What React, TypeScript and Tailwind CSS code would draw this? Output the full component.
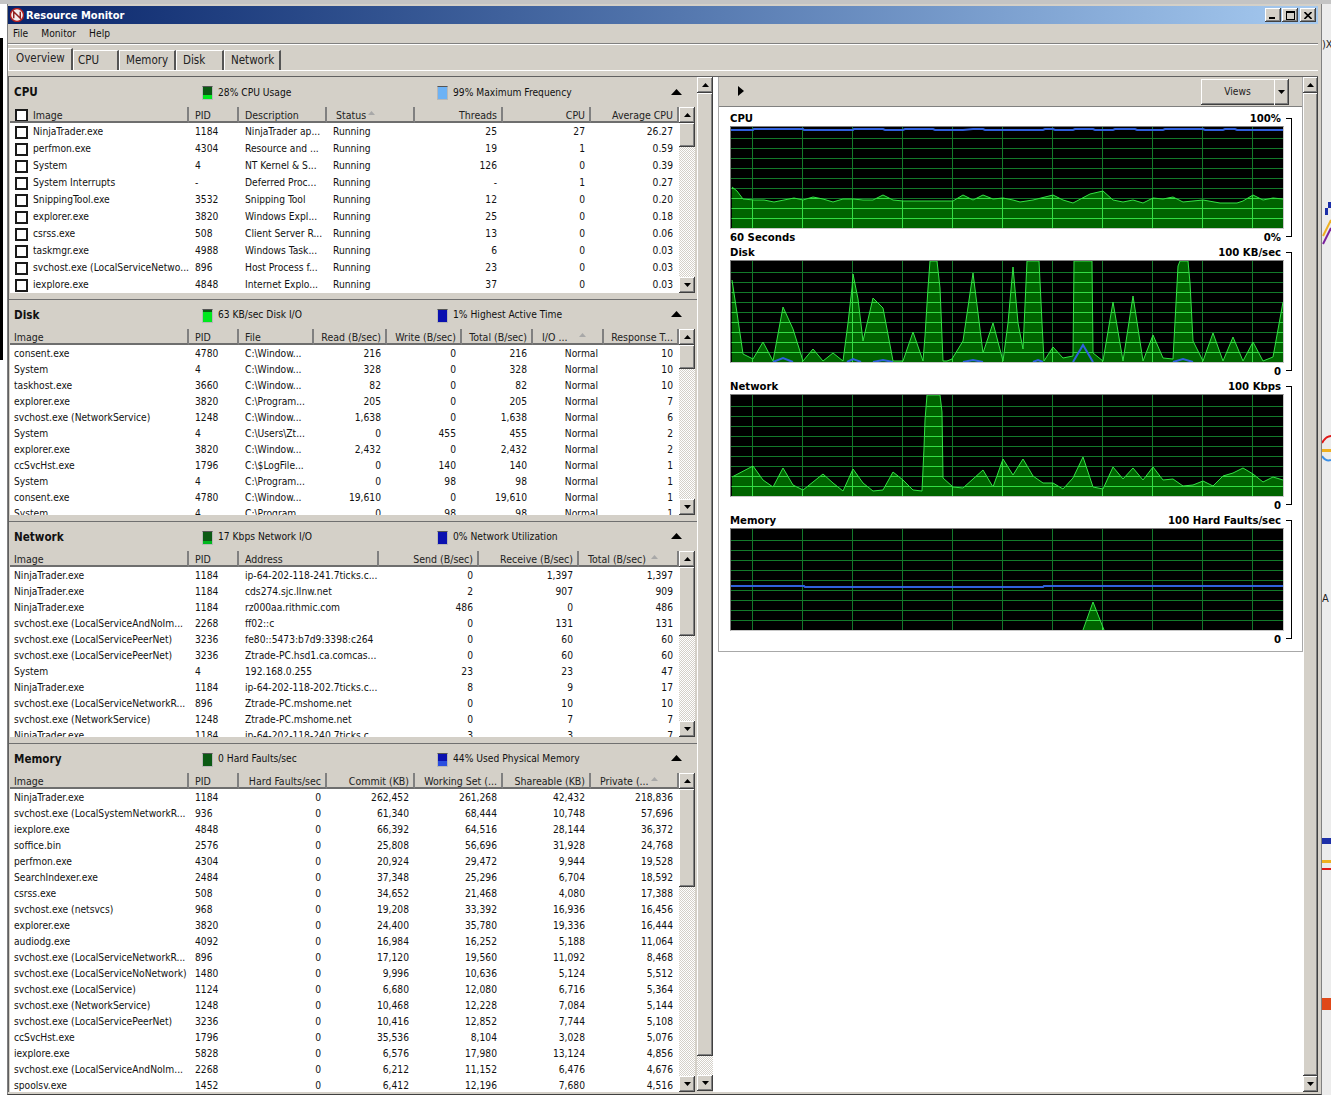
import type { ReactNode } from "react";

const FONT = "[font-family:'DejaVu_Sans_Condensed','Noto_Sans',sans-serif]";
const RAISED = "shadow-[inset_-1px_-1px_0_#404040,inset_1px_1px_0_#ffffff,inset_-2px_-2px_0_#808080]";

type Column = { title: string; width: string; right?: boolean; valueRight?: boolean; sortClass?: string };
type Pt = [number, number];

const cpuColumns: Column[] = [
  { title: "Image", width: "w-[179px]" },
  { title: "PID", width: "w-[50px]" },
  { title: "Description", width: "w-[88px]" },
  { title: "Status", width: "w-[88px]", sortClass: "left-[41px]" },
  { title: "Threads", width: "w-[88px]", right: true, valueRight: true },
  { title: "CPU", width: "w-[88px]", right: true, valueRight: true },
  { title: "Average CPU", width: "w-[88px]", right: true, valueRight: true },
];
const cpuRows = [
  ["NinjaTrader.exe", "1184", "NinjaTrader ap...", "Running", "25", "27", "26.27"],
  ["perfmon.exe", "4304", "Resource and ...", "Running", "19", "1", "0.59"],
  ["System", "4", "NT Kernel & S...", "Running", "126", "0", "0.39"],
  ["System Interrupts", "-", "Deferred Proc...", "Running", "-", "1", "0.27"],
  ["SnippingTool.exe", "3532", "Snipping Tool", "Running", "12", "0", "0.20"],
  ["explorer.exe", "3820", "Windows Expl...", "Running", "25", "0", "0.18"],
  ["csrss.exe", "508", "Client Server R...", "Running", "13", "0", "0.06"],
  ["taskmgr.exe", "4988", "Windows Task...", "Running", "6", "0", "0.03"],
  ["svchost.exe (LocalServiceNetwo...", "896", "Host Process f...", "Running", "23", "0", "0.03"],
  ["iexplore.exe", "4848", "Internet Explo...", "Running", "37", "0", "0.03"],
];

const diskColumns: Column[] = [
  { title: "Image", width: "w-[179px]" },
  { title: "PID", width: "w-[50px]" },
  { title: "File", width: "w-[75px]" },
  { title: "Read (B/sec)", width: "w-[73px]", right: true, valueRight: true },
  { title: "Write (B/sec)", width: "w-[75px]", right: true, valueRight: true },
  { title: "Total (B/sec)", width: "w-[71px]", right: true, valueRight: true },
  { title: "I/O ...", width: "w-[71px]", valueRight: true, sortClass: "right-[16px]" },
  { title: "Response T...", width: "w-[75px]", right: true, valueRight: true },
];
const diskRows = [
  ["consent.exe", "4780", "C:\\Window...", "216", "0", "216", "Normal", "10"],
  ["System", "4", "C:\\Window...", "328", "0", "328", "Normal", "10"],
  ["taskhost.exe", "3660", "C:\\Window...", "82", "0", "82", "Normal", "10"],
  ["explorer.exe", "3820", "C:\\Program...", "205", "0", "205", "Normal", "7"],
  ["svchost.exe (NetworkService)", "1248", "C:\\Window...", "1,638", "0", "1,638", "Normal", "6"],
  ["System", "4", "C:\\Users\\Zt...", "0", "455", "455", "Normal", "2"],
  ["explorer.exe", "3820", "C:\\Window...", "2,432", "0", "2,432", "Normal", "2"],
  ["ccSvcHst.exe", "1796", "C:\\$LogFile...", "0", "140", "140", "Normal", "1"],
  ["System", "4", "C:\\Program...", "0", "98", "98", "Normal", "1"],
  ["consent.exe", "4780", "C:\\Window...", "19,610", "0", "19,610", "Normal", "1"],
  ["System", "4", "C:\\Program...", "0", "98", "98", "Normal", "1"],
];

const networkColumns: Column[] = [
  { title: "Image", width: "w-[179px]" },
  { title: "PID", width: "w-[50px]" },
  { title: "Address", width: "w-[140px]" },
  { title: "Send (B/sec)", width: "w-[100px]", right: true, valueRight: true },
  { title: "Receive (B/sec)", width: "w-[100px]", right: true, valueRight: true },
  { title: "Total (B/sec)", width: "w-[100px]", valueRight: true, sortClass: "right-[19px]" },
];
const networkRows = [
  ["NinjaTrader.exe", "1184", "ip-64-202-118-241.7ticks.c...", "0", "1,397", "1,397"],
  ["NinjaTrader.exe", "1184", "cds274.sjc.llnw.net", "2", "907", "909"],
  ["NinjaTrader.exe", "1184", "rz000aa.rithmic.com", "486", "0", "486"],
  ["svchost.exe (LocalServiceAndNoIm...", "2268", "ff02::c", "0", "131", "131"],
  ["svchost.exe (LocalServicePeerNet)", "3236", "fe80::5473:b7d9:3398:c264", "0", "60", "60"],
  ["svchost.exe (LocalServicePeerNet)", "3236", "Ztrade-PC.hsd1.ca.comcas...", "0", "60", "60"],
  ["System", "4", "192.168.0.255", "23", "23", "47"],
  ["NinjaTrader.exe", "1184", "ip-64-202-118-202.7ticks.c...", "8", "9", "17"],
  ["svchost.exe (LocalServiceNetworkR...", "896", "Ztrade-PC.mshome.net", "0", "10", "10"],
  ["svchost.exe (NetworkService)", "1248", "Ztrade-PC.mshome.net", "0", "7", "7"],
  ["NinjaTrader.exe", "1184", "ip-64-202-118-240.7ticks.c...", "3", "3", "7"],
];

const memoryColumns: Column[] = [
  { title: "Image", width: "w-[179px]" },
  { title: "PID", width: "w-[50px]" },
  { title: "Hard Faults/sec", width: "w-[88px]", right: true, valueRight: true },
  { title: "Commit (KB)", width: "w-[88px]", right: true, valueRight: true },
  { title: "Working Set (...", width: "w-[88px]", right: true, valueRight: true },
  { title: "Shareable (KB)", width: "w-[88px]", right: true, valueRight: true },
  { title: "Private (...", width: "w-[88px]", valueRight: true, sortClass: "right-[19px]" },
];
const memoryRows = [
  ["NinjaTrader.exe", "1184", "0", "262,452", "261,268", "42,432", "218,836"],
  ["svchost.exe (LocalSystemNetworkR...", "936", "0", "61,340", "68,444", "10,748", "57,696"],
  ["iexplore.exe", "4848", "0", "66,392", "64,516", "28,144", "36,372"],
  ["soffice.bin", "2576", "0", "25,808", "56,696", "31,928", "24,768"],
  ["perfmon.exe", "4304", "0", "20,924", "29,472", "9,944", "19,528"],
  ["SearchIndexer.exe", "2484", "0", "37,348", "25,296", "6,704", "18,592"],
  ["csrss.exe", "508", "0", "34,652", "21,468", "4,080", "17,388"],
  ["svchost.exe (netsvcs)", "968", "0", "19,208", "33,392", "16,936", "16,456"],
  ["explorer.exe", "3820", "0", "24,400", "35,780", "19,336", "16,444"],
  ["audiodg.exe", "4092", "0", "16,984", "16,252", "5,188", "11,064"],
  ["svchost.exe (LocalServiceNetworkR...", "896", "0", "17,120", "19,560", "11,092", "8,468"],
  ["svchost.exe (LocalServiceNoNetwork)", "1480", "0", "9,996", "10,636", "5,124", "5,512"],
  ["svchost.exe (LocalService)", "1124", "0", "6,680", "12,080", "6,716", "5,364"],
  ["svchost.exe (NetworkService)", "1248", "0", "10,468", "12,228", "7,084", "5,144"],
  ["svchost.exe (LocalServicePeerNet)", "3236", "0", "10,416", "12,852", "7,744", "5,108"],
  ["ccSvcHst.exe", "1796", "0", "35,536", "8,104", "3,028", "5,076"],
  ["iexplore.exe", "5828", "0", "6,576", "17,980", "13,124", "4,856"],
  ["svchost.exe (LocalServiceAndNoIm...", "2268", "0", "6,212", "11,152", "6,476", "4,676"],
  ["spoolsv.exe", "1452", "0", "6,412", "12,196", "7,680", "4,516"],
];

// chart traces, x and y are px inside the 552x101 plot
const cpuLine: Pt[] = [[1,60],[6,64],[12,72],[23,73],[33,73],[43,75],[53,73],[63,71],[72,73],[82,70],[92,72],[102,75],[112,72],[122,72],[132,73],[142,73],[152,68],[162,73],[172,74],[222,74],[232,68],[242,73],[252,68],[262,72],[272,71],[282,73],[289,75],[302,73],[322,68],[332,73],[342,76],[359,67],[372,64],[382,73],[392,75],[402,73],[412,76],[422,71],[432,72],[442,70],[452,75],[472,73],[489,76],[506,76],[512,74],[522,68],[532,73],[542,71],[552,72]];
const diskLine: Pt[] = [[1,19],[6,52],[12,93],[22,98],[32,81],[42,100],[52,46],[62,68],[72,100],[82,88],[92,100],[102,92],[112,100],[117,62],[121,27],[122,13],[127,38],[132,80],[142,37],[152,47],[162,100],[172,100],[182,71],[192,100],[194,75],[197,27],[199,0],[206,0],[209,27],[212,100],[216,100],[221,98],[232,80],[242,12],[252,92],[262,62],[272,100],[277,62],[282,6],[287,62],[292,88],[296,0],[308,0],[311,62],[313,100],[322,86],[332,97],[342,95],[343,0],[361,0],[362,92],[372,100],[382,41],[392,100],[402,35],[412,100],[422,74],[432,97],[442,98],[447,5],[449,0],[457,0],[459,22],[462,80],[472,100],[482,72],[492,100],[502,76],[512,100],[522,81],[532,100],[542,96],[552,41]];
const networkLine: Pt[] = [[1,82],[22,71],[32,85],[42,92],[52,73],[62,90],[72,95],[92,79],[102,88],[112,96],[122,74],[132,88],[142,96],[152,95],[162,77],[172,85],[182,95],[191,96],[193,53],[194,25],[196,0],[209,0],[211,17],[212,83],[222,92],[232,93],[252,75],[262,92],[272,64],[282,80],[287,72],[292,64],[302,81],[312,88],[322,88],[332,94],[342,83],[352,62],[362,92],[372,94],[382,72],[392,84],[402,73],[412,85],[422,72],[432,85],[442,84],[452,91],[462,90],[472,86],[482,91],[492,81],[502,78],[512,73],[522,79],[532,87],[542,82],[552,85]];
const memoryLine: Pt[] = [[352,101],[362,73],[373,101]];

const cpuBlue: Pt[][] = [[[0,3],[22,3],[23,2],[72,2],[73,3],[122,3],[123,2],[152,2],[154,3],[172,3],[174,2],[202,2],[204,3],[232,3],[242,2],[252,2],[254,3],[312,3],[314,2],[322,2],[324,3],[342,3],[344,2],[362,2],[364,3],[382,3],[384,2],[404,2],[406,3],[432,3],[434,2],[444,2],[472,2],[474,3],[492,3],[494,2],[504,2],[506,3],[552,3]]];
const diskBlue: Pt[][] = [[[42,101],[52,97],[62,101]],[[116,101],[122,98],[130,101]],[[142,101],[152,99],[162,101]],[[232,101],[242,99],[252,101]],[[302,101],[307,99],[312,101]],[[342,101],[352,84],[362,101]],[[442,101],[452,98],[462,101]]];
const memoryBlue: Pt[][] = [[[0,57],[73,57],[74,58],[312,58],[313,57],[552,57]]];

const VERTICALS = [21, 71, 121, 171, 221, 271, 321, 371, 421, 471, 521];
const HORIZONTALS = [11, 21, 31, 41, 51, 61, 71, 81, 91];

function toPath(points: Pt[]) {
  return points.map(([x, y]) => `${x},${y}`).join(" ");
}

function GridLines({ stroke }: { stroke: string }) {
  return (
    <>
      {HORIZONTALS.map((y) => (
        <line key={y} x1="0" x2="552" y1={y + 0.5} y2={y + 0.5} stroke={stroke} strokeWidth="1" />
      ))}
      {VERTICALS.map((x) => (
        <line key={x} y1="0" y2="101" x1={x + 0.5} x2={x + 0.5} stroke={stroke} strokeWidth="1" />
      ))}
    </>
  );
}

function Plot({ id, line, blue }: { id: string; line: Pt[]; blue: Pt[][] }) {
  const area = `${line[0][0]},101 ${toPath(line)} ${line[line.length - 1][0]},101`;
  return (
    <div className="h-[103px] w-[554px] border border-t-[#808080] border-l-[#808080] border-r-[#c8c8c8] border-b-[#c8c8c8]">
      <svg width="552" height="101" className="block bg-black">
        <clipPath id={id}>
          <polygon points={area} />
        </clipPath>
        <GridLines stroke="#13792a" />
        <polygon points={area} fill="#006400" />
        <g clipPath={`url(#${id})`}>
          <GridLines stroke="#33dd44" />
        </g>
        <polyline points={toPath(line)} fill="none" stroke="#33e244" strokeWidth="1" />
        {blue.map((part, i) => (
          <polyline key={i} points={toPath(part)} fill="none" stroke="#3060dc" strokeWidth="2" />
        ))}
      </svg>
    </div>
  );
}

function ChartBlock(props: {
  id: string;
  title: string;
  top: string;
  bottom: string;
  footer?: string;
  line: Pt[];
  blue: Pt[][];
}) {
  return (
    <div className="flex h-[134px]">
      <div className="w-[554px] text-[11.25px] font-bold leading-[18px] text-black">
        <div className="flex h-[16px] justify-between pr-[3px]">
          <span>{props.title}</span>
          <span>{props.top}</span>
        </div>
        <Plot id={props.id} line={props.line} blue={props.blue} />
        <div className="flex h-[15px] justify-between pr-[3px]">
          <span>{props.footer}</span>
          <span>{props.bottom}</span>
        </div>
      </div>
      <div className="ml-[2px] mt-[8px] h-[119px] w-[6px] border-y border-r border-black" />
    </div>
  );
}

function Arrow({ dir }: { dir: "up" | "down" }) {
  return (
    <svg width="7" height="4" viewBox="0 0 7 4" className="block">
      <polygon points={dir === "up" ? "3.5,0 7,4 0,4" : "0,0 7,0 3.5,4"} fill="#000" />
    </svg>
  );
}

function ScrollButton({ dir }: { dir: "up" | "down" }) {
  return (
    <div className={`flex h-[16px] shrink-0 items-center justify-center bg-[#d4d0c8] ${RAISED}`}>
      <Arrow dir={dir} />
    </div>
  );
}

function Scrollbar({ thumb, className }: { thumb: string; className: string }) {
  return (
    <div className={`flex shrink-0 flex-col ${className}`}>
      <ScrollButton dir="up" />
      <div className={`shrink-0 bg-[#d4d0c8] ${RAISED} ${thumb}`} />
      <div className="flex-1 bg-[repeating-conic-gradient(#ffffff_0_25%,#d4d0c8_0_50%)] bg-[length:2px_2px]" />
      <ScrollButton dir="down" />
    </div>
  );
}

function CheckBox() {
  return <span className="mr-[5px] h-[13px] w-[13px] shrink-0 border-2 border-[#1a1a1a] bg-white" />;
}

function cellPad(index: number, check?: boolean) {
  if (index !== 0) return "pl-[6px]";
  return check ? "pl-[5px]" : "pl-[4px]";
}

function HeaderCell({ column, index, check }: { column: Column; index: number; check?: boolean }) {
  const aligned = column.right ? "justify-end pr-[4px]" : cellPad(index, check);
  return (
    <div
      className={`relative flex h-[16px] shrink-0 items-center overflow-hidden whitespace-nowrap border-b-2 border-r-2 border-b-[#6e6e6e] border-r-[#808080] pt-[2px] ${column.width} ${aligned}`}
    >
      {check && index === 0 && <CheckBox />}
      <span className={column.sortClass ? "pl-[3px]" : ""}>{column.title}</span>
      {column.sortClass && (
        <svg width="7" height="4" className={`absolute top-[4px] ${column.sortClass}`}>
          <polygon points="3.5,0 7,4 0,4" fill="#a8a8a8" />
        </svg>
      )}
    </div>
  );
}

function DataTable(props: {
  columns: Column[];
  rows: string[][];
  check?: boolean;
  rowHeight: string;
  thumb: string;
  height: string;
}) {
  const { columns, rows, check, rowHeight } = props;
  return (
    <div className={`flex pl-px ${props.height}`}>
      <div className="flex w-[669px] flex-col">
        <div className="flex bg-[#d4d0c8] text-[10.5px] text-[#222]">
          {columns.map((c, i) => (
            <HeaderCell key={c.title} column={c} index={i} check={check} />
          ))}
        </div>
        <div className="flex-1 overflow-hidden bg-white text-[#111]">
          {rows.map((row, r) => (
            <div key={r} className={`flex ${rowHeight}`}>
              {row.map((cell, i) => (
                <div
                  key={i}
                  className={`flex shrink-0 items-center overflow-hidden whitespace-nowrap pt-[2px] ${columns[i].width} ${columns[i].valueRight ? "justify-end pr-[6px]" : cellPad(i, check)}`}
                >
                  {check && i === 0 && <CheckBox />}
                  {cell}
                </div>
              ))}
            </div>
          ))}
        </div>
      </div>
      <Scrollbar thumb={props.thumb} className="h-full w-[16px]" />
    </div>
  );
}

function LegendItem({ top, bottom, label, width }: { top: string; bottom: string; label: string; width: string }) {
  return (
    <div className={`flex items-center ${width}`}>
      <span className="mr-[5px] flex h-[14px] w-[11px] shrink-0 flex-col border border-[#b8b8b8] border-t-[#555]">
        <span className={top} />
        <span className={bottom} />
      </span>
      {label}
    </div>
  );
}

function SectionHeader(props: { title: string; height: string; legends: ReactNode }) {
  return (
    <div className={`flex items-center pl-[5px] pt-[2px] ${props.height}`}>
      <span className="w-[188px] text-[11.6px] font-bold text-[#111]">{props.title}</span>
      {props.legends}
      <svg width="11" height="6" className="ml-[-26px] mt-[-3px]">
        <polygon points="5.5,0 11,6 0,6" fill="#000" />
      </svg>
    </div>
  );
}

function Section(props: {
  first?: boolean;
  title: string;
  legends: ReactNode;
  children: ReactNode;
}) {
  return (
    <div className={props.first ? "" : "border-t border-[#707070]"}>
      <SectionHeader title={props.title} height={props.first ? "h-[30px]" : "h-[29px]"} legends={props.legends} />
      {props.children}
    </div>
  );
}

function OutsideRight() {
  return (
    <svg width="9" height="1095" className="block">
      <rect width="9" height="1095" fill="#ececec" />
      <text x="0" y="44" fontSize="11" fill="#222">)X</text>
      <path d="M1 240 L9 224" stroke="#7a1f9c" strokeWidth="2" fill="none" />
      <path d="M1 232 L9 216" stroke="#eeb020" strokeWidth="2" fill="none" />
      <rect x="3" y="204" width="3" height="7" fill="#1c2fa8" />
      <rect x="6" y="198" width="3" height="6" fill="#1c2fa8" />
      <path d="M0 439 Q4 432 9 432" stroke="#e01818" strokeWidth="2" fill="none" />
      <rect x="0" y="445" width="9" height="3" fill="#eeb020" />
      <path d="M0 452 Q4 458 9 456" stroke="#3a8fe8" strokeWidth="2" fill="none" />
      <text x="0" y="598" fontSize="11" fill="#222">A</text>
      <rect x="0" y="834" width="9" height="6" fill="#1c2fa8" />
      <rect x="0" y="856" width="9" height="3" fill="#eeb020" />
      <rect x="0" y="864" width="9" height="2" fill="#e01818" />
      <rect x="0" y="994" width="9" height="12" fill="#e04818" />
    </svg>
  );
}

export default function App() {
  const tabs = [
    { label: "CPU", cls: "w-[46px] pl-[4px]" },
    { label: "Memory", cls: "w-[57px] pl-[6px]" },
    { label: "Disk", cls: "w-[48px] pl-[6px]" },
    { label: "Network", cls: "w-[57px] pl-[6px]" },
  ];

  return (
    <div className={`h-[1095px] w-[1331px] overflow-hidden bg-[#d8d8d8] text-[10.2px] leading-none ${FONT}`}>
      <div className="h-[4px] bg-[#c4c4c4]" />
      <div className="flex h-[1091px]">
        <div className="flex h-full w-[7px] flex-col bg-white">
          <div className="mt-[34px] h-[322px] w-[3px] bg-black" />
        </div>

        <div className="flex h-full w-[1315px] flex-col border-x border-b border-x-[#808080] border-b-[#404040] bg-[#d4d0c8] pr-[3px] pt-[2px]">
          <div className="flex h-[18px] items-center bg-gradient-to-r from-[#0a246a] to-[#a6caf0] pl-[2px] pr-[2px]">
            <svg width="14" height="14" viewBox="0 0 15 15" className="mr-[2px]">
              <circle cx="7.5" cy="7.5" r="7" fill="#f4f0f0" stroke="#b02020" strokeWidth="1.5" />
              <path d="M4 11 V4 L11 11 V4" stroke="#902020" strokeWidth="1.6" fill="none" />
            </svg>
            <span className="text-[11px] font-bold text-white">Resource Monitor</span>
            <div className="ml-auto flex gap-[1px]">
              <div className={`relative flex h-[14px] w-[16px] items-end justify-center bg-[#d4d0c8] pb-[3px] ${RAISED}`}>
                <span className="ml-[-3px] h-[2px] w-[6px] bg-black" />
              </div>
              <div className={`flex h-[14px] w-[16px] items-center justify-center bg-[#d4d0c8] ${RAISED}`}>
                <span className="h-[9px] w-[9px] border border-t-2 border-black" />
              </div>
              <div className={`ml-[1px] flex h-[14px] w-[16px] items-center justify-center bg-[#d4d0c8] ${RAISED}`}>
                <svg width="8" height="7" viewBox="0 0 8 7">
                  <path d="M0.5 0 L7.5 7 M7.5 0 L0.5 7" stroke="#000" strokeWidth="1.6" />
                </svg>
              </div>
            </div>
          </div>

          <div className="flex h-[20px] items-center gap-[13px] border-b border-[#808080] pl-[5px] pt-px text-[#111]">
            <span>File</span>
            <span>Monitor</span>
            <span>Help</span>
          </div>

          <div className="flex h-[26px] items-end border-t border-white text-[11.5px] text-[#222]">
            <div className="flex h-[22px] w-[65px] items-center border-l border-t border-r-2 border-l-white border-t-white border-r-[#555] pb-[2px] pl-[7px]">
              Overview
            </div>
            {tabs.map((t) => (
              <div
                key={t.label}
                className={`flex h-[20px] items-center border-l border-t border-r-2 border-l-white border-t-white border-r-[#555] ${t.cls}`}
              >
                {t.label}
              </div>
            ))}
          </div>

          <div className="flex-1 border-t border-white pt-[5px]">
            <div className="flex h-[1016px] border-l border-t border-[#606060] text-[#111]">
              <div className="w-[688px]">
                <Section
                  first
                  title="CPU"
                  legends={
                    <>
                      <LegendItem width="w-[235px]" top="h-[8px] bg-[#0b5a14]" bottom="flex-1 bg-[#00e81e]" label="28% CPU Usage" />
                      <LegendItem width="w-[260px]" top="h-0" bottom="flex-1 bg-[#6db2f5]" label="99% Maximum Frequency" />
                    </>
                  }
                >
                  <DataTable columns={cpuColumns} rows={cpuRows} check rowHeight="h-[17px]" thumb="h-[24px]" height="h-[186px]" />
                </Section>
                <div className="h-[6px]" />
                <Section
                  title="Disk"
                  legends={
                    <>
                      <LegendItem width="w-[235px]" top="h-[2px] bg-[#0b5a14]" bottom="flex-1 bg-[#00e81e]" label="63 KB/sec Disk I/O" />
                      <LegendItem width="w-[260px]" top="flex-1 bg-[#0a10b0]" bottom="h-0" label="1% Highest Active Time" />
                    </>
                  }
                >
                  <DataTable columns={diskColumns} rows={diskRows} rowHeight="h-[16px]" thumb="h-[24px]" height="h-[186px]" />
                </Section>
                <div className="h-[6px]" />
                <Section
                  title="Network"
                  legends={
                    <>
                      <LegendItem width="w-[235px]" top="h-[9px] bg-[#0b5a14]" bottom="flex-1 bg-[#00b81e]" label="17 Kbps Network I/O" />
                      <LegendItem width="w-[260px]" top="flex-1 bg-[#0a10b0]" bottom="h-0" label="0% Network Utilization" />
                    </>
                  }
                >
                  <DataTable columns={networkColumns} rows={networkRows} rowHeight="h-[16px]" thumb="h-[69px]" height="h-[186px]" />
                </Section>
                <div className="h-[6px]" />
                <Section
                  title="Memory"
                  legends={
                    <>
                      <LegendItem width="w-[235px]" top="flex-1 bg-[#0b5a14]" bottom="h-0" label="0 Hard Faults/sec" />
                      <LegendItem width="w-[260px]" top="h-[7px] bg-[#0a10b0]" bottom="flex-1 bg-[#2a4ee0]" label="44% Used Physical Memory" />
                    </>
                  }
                >
                  <DataTable columns={memoryColumns} rows={memoryRows} rowHeight="h-[16px]" thumb="h-[98px]" height="h-[319px]" />
                </Section>
              </div>

              <Scrollbar thumb="h-[963px]" className="h-[1014px] w-[16px]" />

              <div className="w-[5px] bg-white" />

              <div className="flex h-[1015px] w-[585px] flex-col bg-white">
                <div className="h-[575px] border-b border-l border-r border-[#a8a8a8]">
                  <div className="flex h-[30px] items-center border-b border-[#808080] bg-[#d4d0c8] pl-[19px] pr-[13px]">
                    <svg width="6" height="10" viewBox="0 0 6 10" className="mt-[-2px]">
                      <polygon points="0,0 6,5 0,10" fill="#000" />
                    </svg>
                    <div className={`ml-auto flex h-[26px] w-[88px] bg-[#d4d0c8] ${RAISED}`}>
                      <div className="flex w-[74px] items-center justify-center border-r border-white pt-[2px] text-[#222]">Views</div>
                      <div className="flex flex-1 items-center justify-center pr-[1px]">
                        <Arrow dir="down" />
                      </div>
                    </div>
                  </div>
                  <div className="pl-[11px] pt-[3px]">
                    <ChartBlock id="cpu" title="CPU" top="100%" bottom="0%" footer="60 Seconds" line={cpuLine} blue={cpuBlue} />
                    <ChartBlock id="disk" title="Disk" top="100 KB/sec" bottom="0" line={diskLine} blue={diskBlue} />
                    <ChartBlock id="network" title="Network" top="100 Kbps" bottom="0" line={networkLine} blue={[]} />
                    <ChartBlock id="memory" title="Memory" top="100 Hard Faults/sec" bottom="0" line={memoryLine} blue={memoryBlue} />
                  </div>
                </div>
              </div>

              <Scrollbar thumb="h-[983px]" className="h-[1014px] w-[15px]" />
            </div>
          </div>
        </div>

        <OutsideRight />
      </div>
    </div>
  );
}
